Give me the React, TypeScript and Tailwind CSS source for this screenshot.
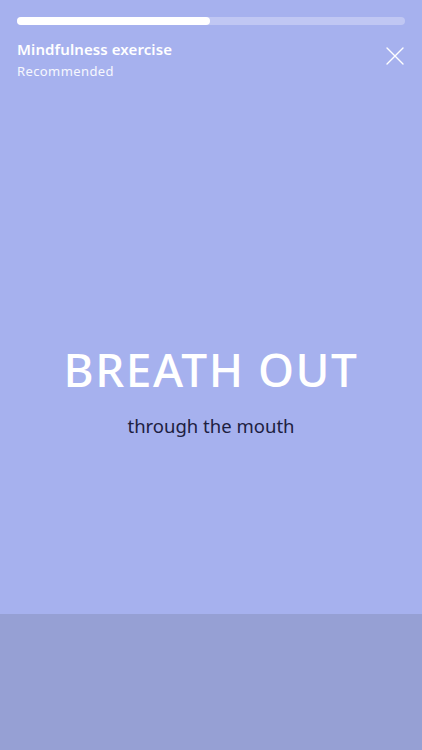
import React from "react";

export default function App() {
  return (
    <div
      className="w-[422px] h-[750px] flex flex-col bg-[#a6b1ee] overflow-hidden"
      style={{ fontFamily: '"Noto Sans", "Open Sans", sans-serif' }}
    >
      <div className="h-[614px] flex flex-col px-[17px] pt-[17px]">
        <div className="h-[8px] w-full rounded-full bg-[#c0c7f3] flex">
          <div className="h-full w-[193px] rounded-full bg-white" />
        </div>
        <div className="flex justify-between items-start mt-[14px]">
          <div className="flex flex-col">
            <div className="text-white text-[15px] font-semibold leading-[20px] tracking-[0.1px]">Mindfulness exercise</div>
            <div className="text-white/90 text-[13px] leading-[18px] mt-[3px] tracking-[0.4px]">Recommended</div>
          </div>
          <svg width="18" height="18" viewBox="0 0 18 18" className="mt-[8px] mr-[1px]">
            <path d="M1 1 L17 17 M17 1 L1 17" stroke="white" strokeWidth="1.4" strokeLinecap="round" />
          </svg>
        </div>
        <div className="flex flex-col items-center mt-[261px]">
          <div className="text-white text-[46px] font-medium leading-[56px] tracking-[1.5px]">BREATH OUT</div>
          <div className="text-[#1d2040] text-[18.5px] leading-[24px] mt-[17px]">through the mouth</div>
        </div>
      </div>
      <div className="flex-1 bg-[#96a0d4]" />
    </div>
  );
}
